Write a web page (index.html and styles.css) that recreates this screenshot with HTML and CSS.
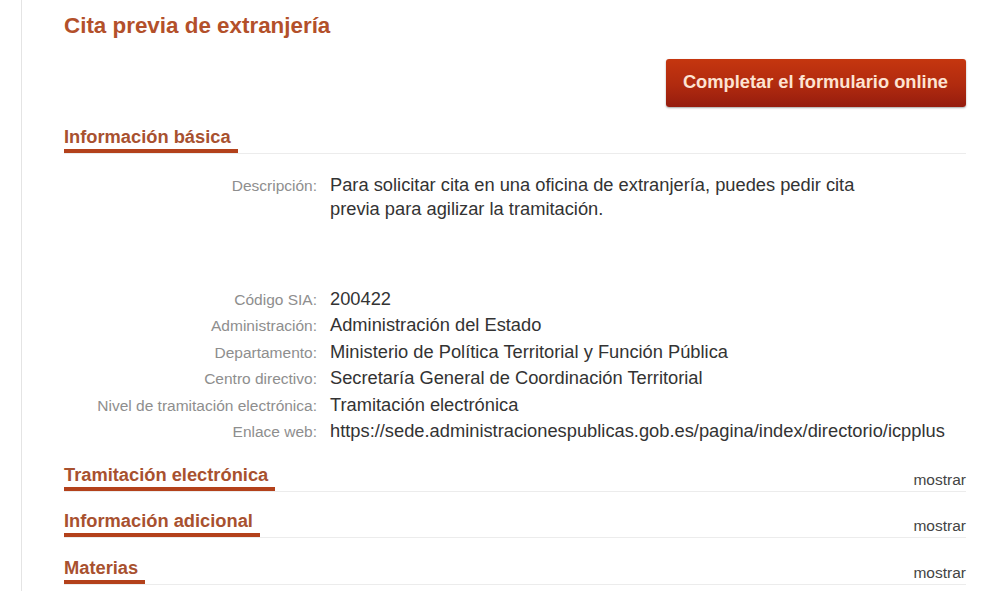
FILE: index.html
```html
<!DOCTYPE html>
<html lang="es">
<head>
<meta charset="utf-8">
<title>Cita previa de extranjería</title>
<link rel="stylesheet" href="styles.css">
</head>
<body>
<div class="page">
  <h1 class="title">Cita previa de extranjería</h1>
  <div class="actions">
    <a class="btn" href="#">Completar el formulario online</a>
  </div>

  <section class="section">
    <div class="section-head">
      <h2 class="section-title">Información básica</h2>
    </div>
    <div class="info">
      <div class="label">Descripción:</div>
      <div class="value desc">Para solicitar cita en una oficina de extranjería, puedes pedir cita previa para agilizar la tramitación.</div>
    </div>
    <div class="info rows">
      <div class="label">Código SIA:</div>
      <div class="value">200422</div>
      <div class="label">Administración:</div>
      <div class="value">Administración del Estado</div>
      <div class="label">Departamento:</div>
      <div class="value">Ministerio de Política Territorial y Función Pública</div>
      <div class="label">Centro directivo:</div>
      <div class="value">Secretaría General de Coordinación Territorial</div>
      <div class="label">Nivel de tramitación electrónica:</div>
      <div class="value">Tramitación electrónica</div>
      <div class="label">Enlace web:</div>
      <div class="value">https://sede.administracionespublicas.gob.es/pagina/index/directorio/icpplus</div>
    </div>
  </section>

  <section class="section">
    <div class="section-head">
      <h2 class="section-title">Tramitación electrónica</h2>
      <a class="toggle" href="#">mostrar</a>
    </div>
  </section>

  <section class="section">
    <div class="section-head">
      <h2 class="section-title">Información adicional</h2>
      <a class="toggle" href="#">mostrar</a>
    </div>
  </section>

  <section class="section">
    <div class="section-head">
      <h2 class="section-title">Materias</h2>
      <a class="toggle" href="#">mostrar</a>
    </div>
  </section>
</div>
</body>
</html>
```
FILE: styles.css
```css
html, body {
  margin: 0;
  padding: 0;
  background: #ffffff;
}

body {
  font-family: "Liberation Sans", Arial, sans-serif;
  color: #333333;
  overflow: hidden;
}

.page {
  margin-left: 21px;
  border-left: 1px solid #e4e4e4;
  padding: 13px 34px 0 42px;
  min-height: 591px;
  box-sizing: border-box;
}

.title {
  margin: 0;
  font-size: 22.4px;
  line-height: 26px;
  font-weight: bold;
  color: #b3502a;
}

.actions {
  display: flex;
  justify-content: flex-end;
  margin-top: 20px;
}

.btn {
  display: block;
  padding: 12px 18px 14px 17px;
  font-size: 18.3px;
  line-height: 22px;
  font-weight: bold;
  color: #fde3d2;
  text-decoration: none;
  border-radius: 3px;
  background: linear-gradient(to bottom, #c5360f 0%, #b02a0f 55%, #951c0e 100%);
  box-shadow: 0 1px 2px rgba(0, 0, 0, 0.35);
}

.section {
  margin-top: 18.5px;
}

.section-head {
  display: flex;
  justify-content: space-between;
  align-items: flex-end;
  border-bottom: 1px solid #ececec;
}

.section-title {
  margin: 0;
  font-size: 18.3px;
  line-height: 22px;
  font-weight: bold;
  color: #a8512f;
  padding: 0 7px 1px 0;
  border-bottom: 4px solid #b3411b;
}

.toggle {
  font-size: 15.5px;
  line-height: 18px;
  padding-bottom: 2px;
  color: #444444;
  text-decoration: none;
}

.info {
  display: grid;
  grid-template-columns: 253px 1fr;
  column-gap: 13px;
  align-items: baseline;
  margin-top: 19px;
}

.info.rows {
  margin-top: 65px;
}

.label {
  text-align: right;
  font-size: 15.5px;
  color: #8e8e8e;
  line-height: 20px;
  white-space: nowrap;
}

.value {
  font-size: 18.3px;
  line-height: 24px;
  color: #333333;
}

.rows .value {
  line-height: 26.6px;
  white-space: nowrap;
}

.desc {
  max-width: 545px;
}
```
